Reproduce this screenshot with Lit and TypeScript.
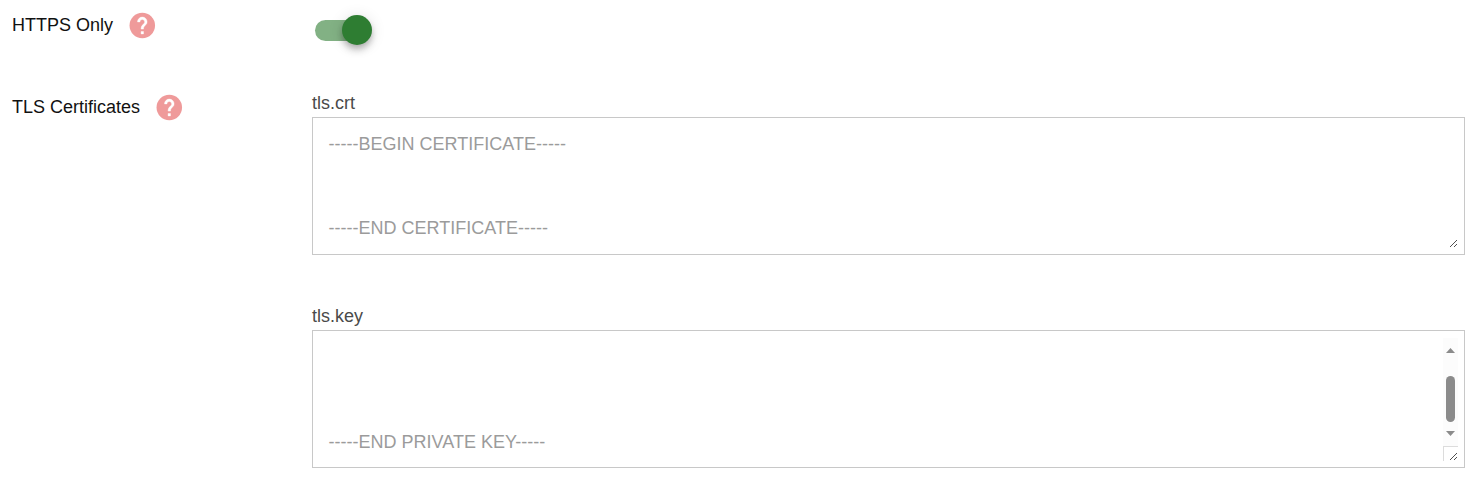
import { LitElement, html, css } from "lit";
import { customElement, property } from "lit/decorators.js";

@customElement("help-icon")
class HelpIcon extends LitElement {
  static styles = css`
    :host { display: block; width: 30.6px; height: 30.6px; }
    .icon { display: block; width: 100%; height: 100%; }
    .disc { fill: #ef9a9a; }
    .mark { fill: #fff; stroke: #fff; stroke-width: 0.35; stroke-linejoin: round; }
  `;
  render() {
    return html`<svg class="icon" viewBox="0 0 24 24" aria-label="Help">
      <circle class="disc" cx="12" cy="12.2" r="10" />
      <path class="mark" transform="translate(0.72 0.87) scale(0.94)" d="M15.07,11.25L14.17,12.17C13.45,12.89 13,13.5 13,15H11V14.5C11,13.39 11.45,12.39 12.17,11.67L13.41,10.41C13.78,10.05 14,9.55 14,9C14,7.89 13.1,7 12,7A2,2 0 0,0 10,9H8A4,4 0 0,1 12,5A4,4 0 0,1 16,9C16,9.88 15.64,10.67 15.07,11.25M13,19H11V17H13Z"/>
    </svg>`;
  }
}

@customElement("toggle-switch")
class ToggleSwitch extends LitElement {
  static styles = css`
    :host { display: block; }
    .track {
      display: flex; align-items: center; justify-content: flex-end;
      width: 54px; height: 21px; border-radius: 10.5px;
      background: rgba(46, 125, 50, 0.6);
    }
    .thumb {
      flex: none; width: 30px; height: 30px; margin: 0 -3px 1px 0;
      border-radius: 50%; background: #2e7d32;
      box-shadow: 0 3px 6px -1.5px rgba(0, 0, 0, 0.2),
        0 6px 7.5px rgba(0, 0, 0, 0.14), 0 1.5px 15px rgba(0, 0, 0, 0.12);
    }
  `;
  render() {
    return html`<div class="track" role="switch" aria-checked="true"><div class="thumb"></div></div>`;
  }
}

@customElement("text-box")
class TextBox extends LitElement {
  @property({ type: Array }) lines: string[] = [];
  @property({ type: Boolean }) scrollable = false;

  static styles = css`
    :host { display: block; }
    .box {
      box-sizing: border-box; height: 138px; border: 1px solid #c8c8c8;
      padding: 7px 6px 6px 15.6px; display: flex; justify-content: space-between;
    }
    .text { padding-top: 9px; color: #9b9b9b; line-height: 21px; }
    .scrolled { padding-top: 10px; }
    .line { height: 21px; white-space: pre; }
    .side { width: 15px; display: flex; flex-direction: column; }
    .bar {
      height: 108px; background: #fcfcfc; display: flex;
      flex-direction: column; align-items: center;
    }
    .arrow { display: block; width: 9px; height: 5px; fill: #8b8b8b; }
    .up { margin-top: 10px; }
    .thumb { width: 9px; height: 46px; margin: 23px 0 9px; border-radius: 4.5px; background: #8b8b8b; }
    .corner {
      box-sizing: border-box; width: 15px; height: 15px; margin-top: auto;
      display: flex; justify-content: flex-end; align-items: flex-end; padding: 0 1px 1px 0;
    }
    .framed { border-top: 1px solid #dcdcdc; border-left: 1px solid #dcdcdc; }
    .grip { display: block; width: 7px; height: 7px; fill: #505050; }
  `;
  render() {
    return html`<div class="box">
      <div class="text ${this.scrollable ? "scrolled" : ""}">${this.lines.map((l) => html`<div class="line">${l}</div>`)}</div>
      <div class="side">
        ${this.scrollable
          ? html`<div class="bar">
              <svg class="arrow up" viewBox="0 0 9 5"><path d="M4.5 0L9 5H0Z" /></svg>
              <div class="thumb"></div>
              <svg class="arrow" viewBox="0 0 9 5"><path d="M0 0H9L4.5 5Z" /></svg>
            </div>`
          : ""}
        <div class="corner ${this.scrollable ? "framed" : ""}">
          <svg class="grip" viewBox="0 0 7 7" shape-rendering="crispEdges">
            <path d="M0 6h1v1h-1zM1 5h1v1h-1zM2 4h1v1h-1zM3 3h1v1h-1zM4 2h1v1h-1zM5 1h1v1h-1zM6 0h1v1h-1zM4 6h1v1h-1zM5 5h1v1h-1zM6 4h1v1h-1z" />
          </svg>
        </div>
      </div>
    </div>`;
  }
}

@customElement("app-root")
class AppRoot extends LitElement {
  static styles = css`
    :host {
      display: block; box-sizing: border-box; height: 491px; overflow: hidden;
      padding: 10px 14px 0 12px; background: #fff;
      font: 18px/30px "Liberation Sans", Arial, sans-serif; color: #111;
    }
    .row { display: grid; grid-template-columns: 300px 1fr; align-items: start; }
    .first { height: 82px; }
    .name { display: flex; align-items: flex-start; gap: 13.7px; height: 31px; }
    .caption { height: 30px; }
    .switch { padding: 10px 0 0 3px; }
    .label { height: 25px; line-height: 22px; color: #4a4a4a; }
    .field + .field { margin-top: 50px; }
  `;
  render() {
    return html`
      <div class="row first">
        <div class="name"><span class="caption">HTTPS Only</span><help-icon></help-icon></div>
        <div class="switch"><toggle-switch></toggle-switch></div>
      </div>
      <div class="row">
        <div class="name"><span class="caption">TLS Certificates</span><help-icon></help-icon></div>
        <div class="fields">
          <div class="field">
            <div class="label">tls.crt</div>
            <text-box .lines=${["-----BEGIN CERTIFICATE-----", "", "", "", "-----END CERTIFICATE-----"]}></text-box>
          </div>
          <div class="field">
            <div class="label">tls.key</div>
            <text-box scrollable .lines=${["", "", "", "", "-----END PRIVATE KEY-----"]}></text-box>
          </div>
        </div>
      </div>
    `;
  }
}
